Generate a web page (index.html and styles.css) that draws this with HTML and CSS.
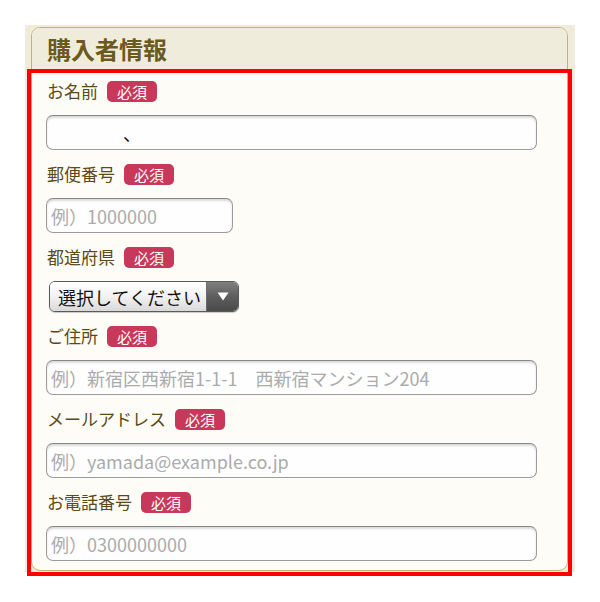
FILE: index.html
```html
<!DOCTYPE html>
<html lang="ja">
<head>
<meta charset="utf-8">
<title>購入者情報</title>
<link rel="stylesheet" href="styles.css">
</head>
<body>
<div class="page">
  <div class="panel">
    <section class="card">
      <h2 class="card-title">購入者情報</h2>
      <div class="card-body">
        <div class="field">
          <div class="label">お名前<span class="req">必須</span></div>
          <input class="input full" type="text" value="　　　　、">
        </div>
        <div class="field">
          <div class="label">郵便番号<span class="req">必須</span></div>
          <input class="input zip" type="text" placeholder="例）1000000">
        </div>
        <div class="field">
          <div class="label">都道府県<span class="req">必須</span></div>
          <div class="select">
            <select class="select-native">
              <option>選択してください</option>
            </select>
            <span class="select-arrow"><svg width="12" height="9" viewBox="0 0 12 9"><path d="M0.5 0.5 H11.5 L6 8.5 Z" fill="#fff"/></svg></span>
          </div>
        </div>
        <div class="field">
          <div class="label">ご住所<span class="req">必須</span></div>
          <input class="input full" type="text" placeholder="例）新宿区西新宿1-1-1　西新宿マンション204">
        </div>
        <div class="field">
          <div class="label">メールアドレス<span class="req">必須</span></div>
          <input class="input full" type="text" placeholder="例）yamada@example.co.jp">
        </div>
        <div class="field">
          <div class="label">お電話番号<span class="req">必須</span></div>
          <input class="input full" type="text" placeholder="例）0300000000">
        </div>
      </div>
    </section>
  </div>
  <div class="highlight"></div>
</div>
</body>
</html>
```

FILE: styles.css
```css
html, body {
  margin: 0;
  padding: 0;
  background: #ffffff;
}

body {
  font-family: "Noto Sans CJK JP", "Noto Sans", sans-serif;
}

.page {
  position: relative;
  padding: 25px 25px 26px 25px;
}

.panel {
  background: #f0ecdc;
  padding: 2px 7px 1px 6px;
}

.card {
  border: 1px solid #c2b374;
  border-radius: 9px;
  overflow: hidden;
  background: #fdfcf7;
}

.card-title {
  margin: 0;
  height: 42px;
  line-height: 42px;
  padding-left: 15px;
  background: #f0ecdc;
  color: #6b5a1e;
  font-size: 24px;
  font-weight: bold;
}

.card-body {
  padding: 9px 31px 9px 14px;
}

.field {
  margin-bottom: 12px;
}

.field:last-child {
  margin-bottom: 0;
}

.label {
  height: 24px;
  line-height: 24px;
  margin-bottom: 12px;
  padding-left: 1px;
  color: #5b4a16;
  font-size: 17px;
  display: flex;
  align-items: center;
}

.req {
  display: inline-block;
  margin-left: 9px;
  height: 21px;
  line-height: 21px;
  padding: 0 10px;
  border-radius: 5px;
  background: #c8385a;
  color: #ffffff;
  font-size: 15px;
}

.input {
  display: block;
  box-sizing: border-box;
  height: 35px;
  margin: 0;
  padding: 0 4px;
  border: 1px solid #9c9c9c;
  border-top-color: #888888;
  border-radius: 7px;
  background: #fefefe;
  box-shadow: inset 0 2px 2px rgba(0, 0, 0, 0.14);
  font-family: "Noto Sans CJK JP", "Noto Sans", sans-serif;
  font-size: 18px;
  color: #000000;
  outline: none;
}

.input::placeholder {
  color: #ababab;
}

.full {
  width: 491px;
}

.zip {
  width: 187px;
}

.select {
  display: flex;
  box-sizing: border-box;
  width: 190px;
  height: 31px;
  margin: 1px 0 0 3px;
  border: 1px solid #5a5a5a;
  border-radius: 6px;
  overflow: hidden;
  box-shadow: 0 1px 1px rgba(0, 0, 0, 0.2);
}

.select-native {
  flex: 1;
  min-width: 0;
  margin: 0;
  padding: 0 0 0 8px;
  border: none;
  -webkit-appearance: none;
  appearance: none;
  background: linear-gradient(#ffffff, #f2f2f2 50%, #d9d9d9);
  font-family: "Noto Sans CJK JP", "Noto Sans", sans-serif;
  font-size: 18px;
  color: #111111;
  outline: none;
}

.select-arrow {
  width: 31px;
  display: flex;
  align-items: center;
  justify-content: center;
  background: linear-gradient(#808080, #5e5e5e 50%, #4a4a4a);
  border-left: 1px solid #6a6a6a;
}

.highlight {
  position: absolute;
  left: 27px;
  top: 69px;
  width: 545px;
  height: 507px;
  box-sizing: border-box;
  border: 4px solid #ff0000;
  pointer-events: none;
}
```
